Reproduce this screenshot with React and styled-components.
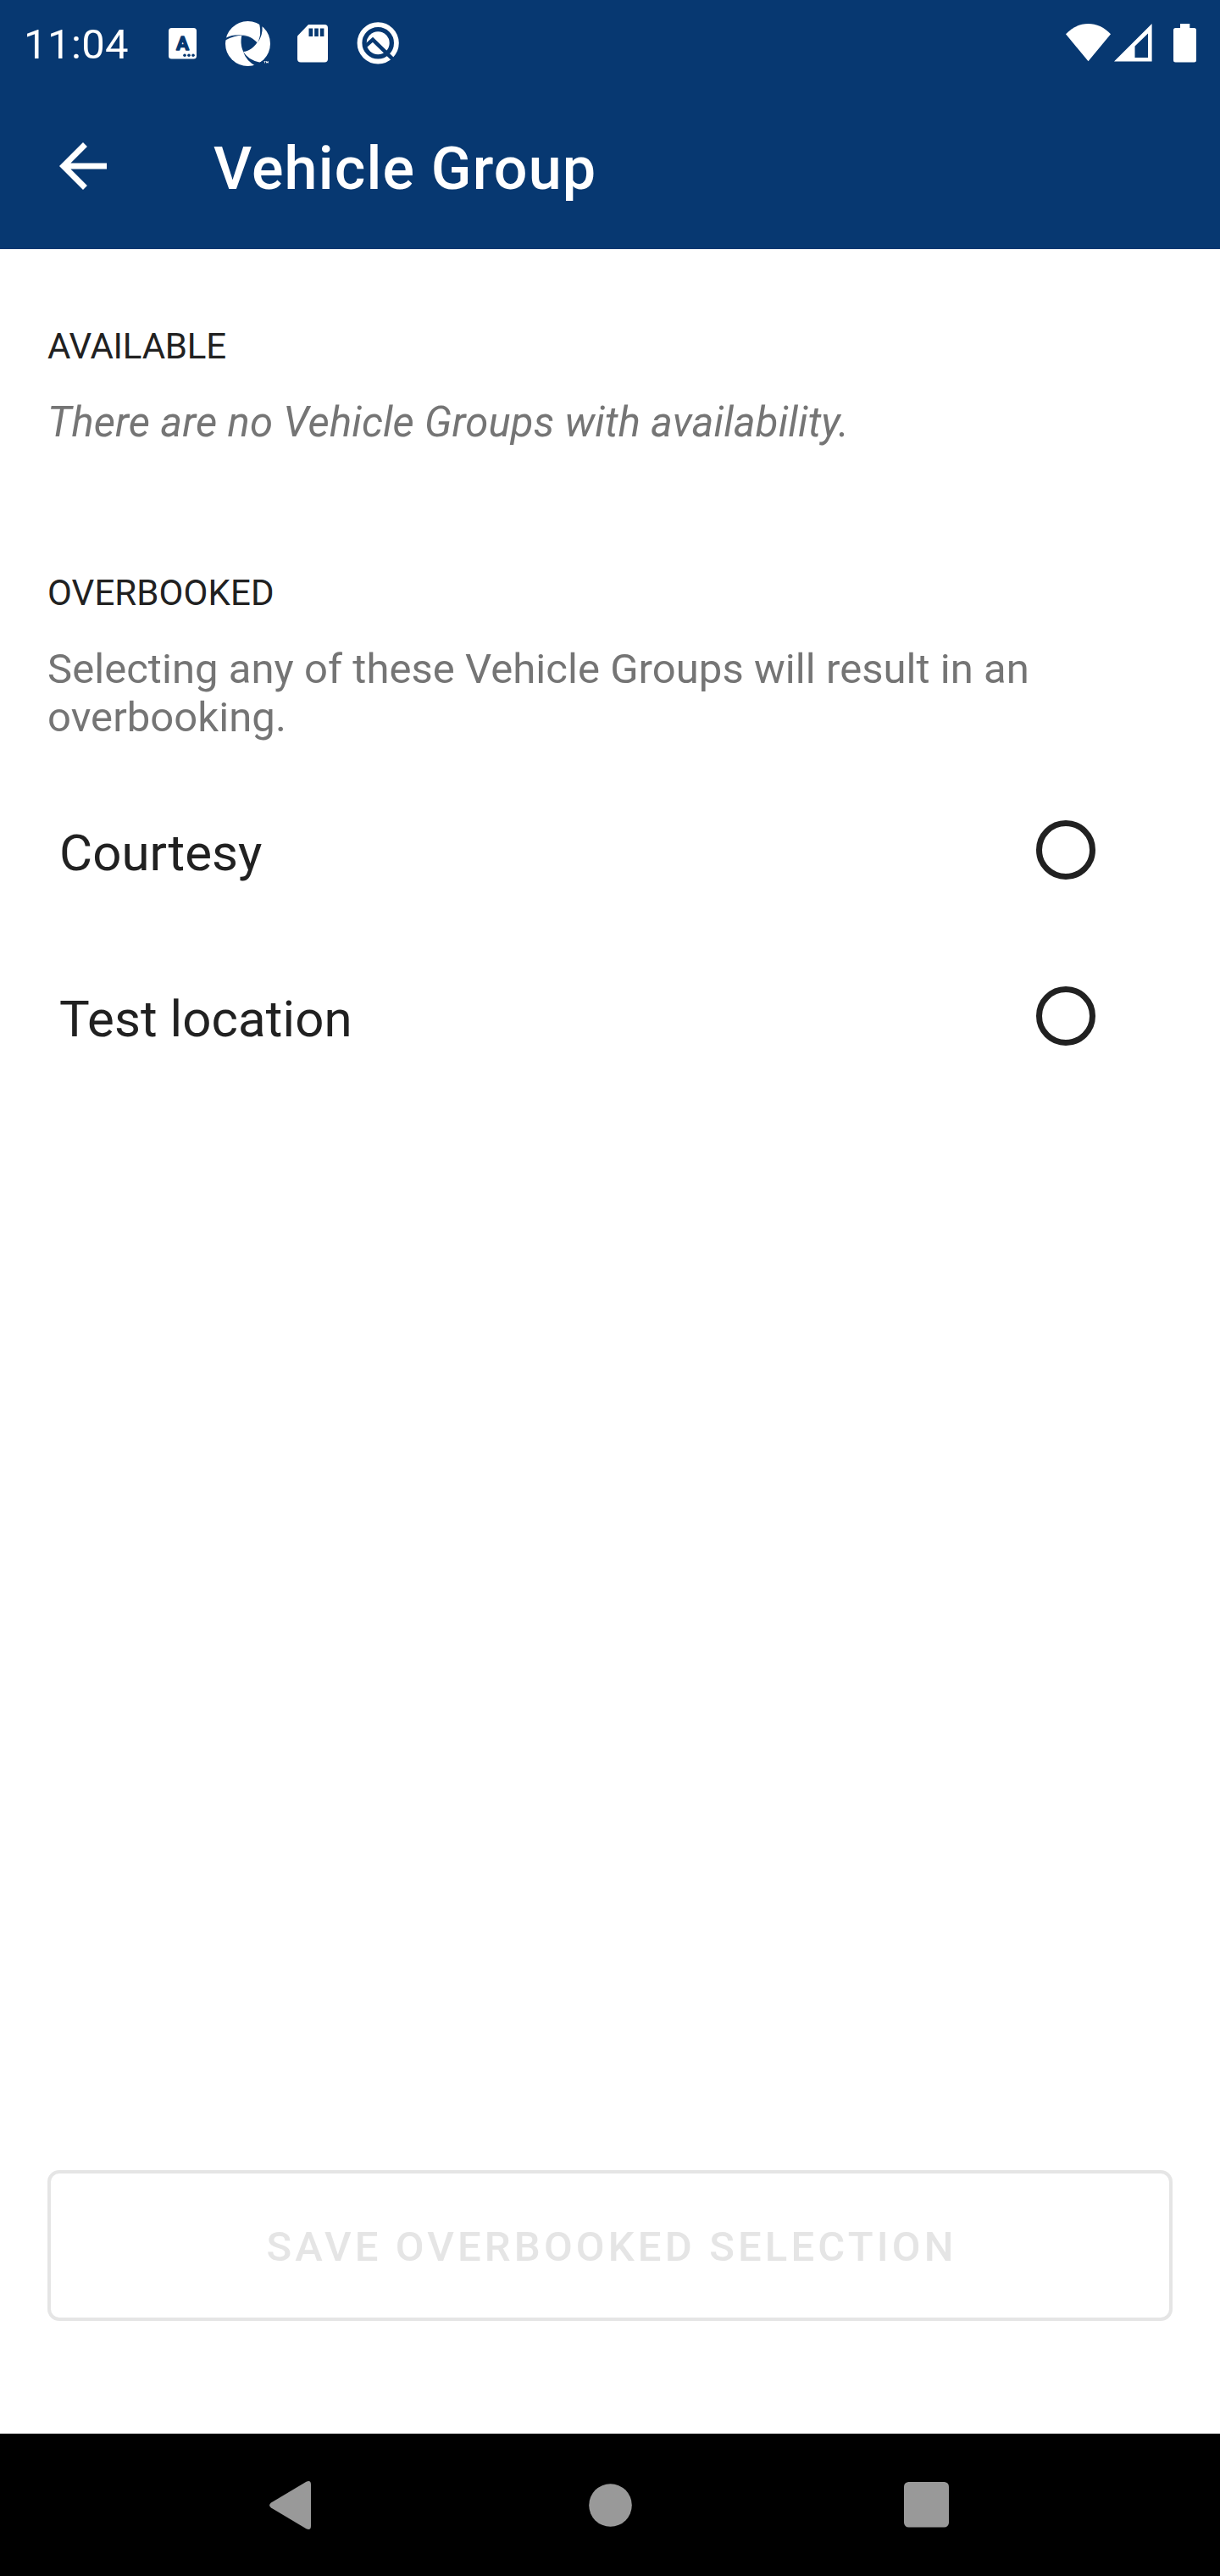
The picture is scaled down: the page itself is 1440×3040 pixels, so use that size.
import React from "react";
import styled, { createGlobalStyle } from "styled-components";

const NAVY = "#073871";
const INK = "#212121";
const MUTED = "#757575";
const DISABLED = "#e5e5e5";

const GlobalStyle = createGlobalStyle`
  * { box-sizing: border-box; }
  body { margin: 0; background: #fff; font-family: Roboto, sans-serif; }
  h1, h2, p { margin: 0; font-weight: 400; }
  svg { display: block; flex: none; }
`;

const Screen = styled.div`
  display: flex;
  flex-direction: column;
  width: 1440px;
  height: 3040px;
  background: #fff;
  color: ${INK};
`;

const StatusBar = styled.header`
  display: flex;
  justify-content: space-between;
  height: 98px;
  padding: 0 28px 0 28px;
  background: ${NAVY};
  color: #fff;
`;

const StatusGroup = styled.div`
  display: flex;
  align-items: flex-start;
`;

const Clock = styled.span`
  width: 171px;
  padding-top: 24px;
  font-size: 49px;
  line-height: 58px;
  letter-spacing: 0.4px;
`;

const StatusIcon = styled.svg`
  margin-top: ${(p) => p.$top}px;
  margin-right: ${(p) => p.$gap || 0}px;
`;

const AppBar = styled.div`
  display: flex;
  align-items: center;
  height: 196px;
  padding: 0 56px;
  background: ${NAVY};
  color: #fff;
`;

const BackButton = styled.button`
  width: 84px;
  height: 84px;
  margin-right: 112px;
  padding: 0;
  border: 0;
  background: none;
  color: inherit;
`;

const Title = styled.h1`
  padding-top: 6px;
  font-size: 70px;
  font-weight: 500;
  line-height: 82px;
  letter-spacing: 1.2px;
`;

const Content = styled.main`
  display: flex;
  flex-direction: column;
  flex: 1;
  padding: 90px 56px 133px;
`;

const Section = styled.section`
  margin-bottom: ${(p) => p.$bottom}px;
`;

const SectionLabel = styled.h2`
  margin-bottom: 36px;
  font-size: 42px;
  line-height: 50px;
  letter-spacing: ${(p) => p.$tracking}px;
  text-transform: uppercase;
`;

const Description = styled.p`
  color: ${MUTED};
  font-size: 49px;
  font-style: ${(p) => (p.$italic ? "italic" : "normal")};
  line-height: 57px;
  letter-spacing: ${(p) => p.$tracking}px;
`;

const Options = styled.div`
  display: flex;
  flex-direction: column;
`;

const Option = styled.label`
  display: flex;
  align-items: center;
  justify-content: space-between;
  height: 196px;
  padding: 0 91px 0 14px;
`;

const OptionName = styled.span`
  padding-top: 7px;
  font-size: 60px;
  line-height: 70px;
  letter-spacing: 0.08px;
`;

const Radio = styled.span`
  width: 70px;
  height: 70px;
  border: 7px solid ${INK};
  border-radius: 50%;
`;

const SaveButton = styled.button`
  height: 178px;
  margin-top: auto;
  padding: 4px 0 0 4px;
  border: 4px solid ${DISABLED};
  border-radius: 14px;
  background: none;
  color: ${DISABLED};
  font: 500 49px/58px Roboto, sans-serif;
  letter-spacing: 4.15px;
  text-transform: uppercase;
`;

const NavBar = styled.nav`
  display: flex;
  align-items: center;
  height: 168px;
  padding: 0 320px 0 318px;
  justify-content: space-between;
  background: #000;
  color: #999;
`;

const HomeIcon = styled.svg`
  margin-left: 6px;
`;

function KeyboardIcon() {
  return (
    <StatusIcon $top={33} $gap={34} width="33" height="37" viewBox="0 0 33 37">
      <rect width="33" height="36.6" rx="3.5" fill="#fff" />
      <text x="16.5" y="26.3" textAnchor="middle" fontFamily="Roboto, sans-serif" fontWeight="700" fontSize="22.5" fill={NAVY} stroke={NAVY} strokeWidth="1.3" strokeLinejoin="round">A</text>
      <circle cx="19" cy="32.3" r="1.8" fill={NAVY} />
      <circle cx="24" cy="32.3" r="1.8" fill={NAVY} />
      <circle cx="29" cy="32.3" r="1.8" fill={NAVY} />
    </StatusIcon>
  );
}

function ApertureIcon() {
  return (
    <StatusIcon $top={25} $gap={32} width="53" height="53" viewBox="0 0 53 53">
      <circle cx="26.5" cy="26.5" r="26.5" fill="#fff" />
      <path d="M19.3 17C26 16.4 32.7 19.7 37.5 25.3C33.2 31.6 27.5 35.7 21.2 36C18.2 29.5 18 23 19.3 17Z" fill={NAVY} />
      <path d="M37.6 25.6Q43.4 17.5 40 2L43.5 4Q44.6 18 37.6 25.6Z" fill={NAVY} />
      <path d="M26 17.1Q12 15.3 -1 23L0.5 19.7Q10 14.6 26 17.1Z" fill={NAVY} />
      <path d="M20.9 35.6Q27 46.6 42 49L36 53Q24.5 47 20.9 35.6Z" fill={NAVY} />
      <path d="M41 48.5L53 42V53H35Z" fill={NAVY} />
      <path d="M45.6 47.2h2v.9h-.6v1.5h-.8v-1.5h-.6zM48 47.2h.8l.6.9.6-.9h.8v2.4h-.7v-1l-.7.8-.7-.8v1H48z" fill="#fff" />
    </StatusIcon>
  );
}

function SdCardIcon() {
  return (
    <StatusIcon $top={29} $gap={34} width="36" height="45" viewBox="0 0 36 45">
      <path d="M13 0H32Q36 0 36 4V40.5Q36 44.5 32 44.5H4Q0 44.5 0 40.5V13.5Z" fill="#fff" />
      <path d="M13.5 4.5h4.7v9.4h-4.7zM20.2 4.5h4.6v9.4h-4.6zM26.8 4.5h4.6v9.4h-4.6z" fill={NAVY} />
    </StatusIcon>
  );
}

function QIcon() {
  return (
    <StatusIcon $top={26} width="50" height="50" viewBox="0 0 50 50">
      <circle cx="25.2" cy="24.8" r="21.7" fill="none" stroke="#fff" strokeWidth="5.8" />
      <circle cx="25.2" cy="24.8" r="13.5" fill="#fff" />
      <path d="M11 27.8L19 20.8L43.5 44.6" fill="none" stroke={NAVY} strokeWidth="4.4" />
    </StatusIcon>
  );
}

function App() {
  return (
    <>
      <GlobalStyle />
      <Screen>
        <StatusBar>
          <StatusGroup>
            <Clock>11:04</Clock>
            <KeyboardIcon />
            <ApertureIcon />
            <SdCardIcon />
            <QIcon />
          </StatusGroup>
          <StatusGroup>
            <StatusIcon $top={28} $gap={4} width="53" height="45" viewBox="0 0 53 45" fill="#fff">
              <path d="M0 12.3C15-4.1 38-4.1 53 12.3L26.5 44.3Z" />
            </StatusIcon>
            <StatusIcon $top={28} $gap={25} width="45" height="45" viewBox="0 0 45 45" fill="#fff">
              <path fillRule="evenodd" d="M0 44.5L44.6 0V44.5ZM24.5 26.5V40H40V11.5Z" />
            </StatusIcon>
            <StatusIcon $top={28} width="27" height="46" viewBox="0 0 27 46" fill="#fff">
              <path d="M8 0H19.3V5H24.5Q27 5 27 7.5V43Q27 45.5 24.5 45.5H2.5Q0 45.5 0 43V7.5Q0 5 2.5 5H8Z" />
            </StatusIcon>
          </StatusGroup>
        </StatusBar>

        <AppBar>
          <BackButton aria-label="Back">
            <svg width="84" height="84" viewBox="0 0 24 24" fill="currentColor">
              <path d="M20 11H7.83l5.59-5.59L12 4l-8 8 8 8 1.41-1.41L7.83 13H20v-2z" />
            </svg>
          </BackButton>
          <Title>Vehicle Group</Title>
        </AppBar>

        <Content>
          <Section $bottom={148}>
            <SectionLabel $tracking={-0.2}>Available</SectionLabel>
            <Description $italic $tracking={0.12}>There are no Vehicle Groups with availability.</Description>
          </Section>
          <Section $bottom={30}>
            <SectionLabel $tracking={0.1}>Overbooked</SectionLabel>
            <Description $tracking={0.05}>
              Selecting any of these Vehicle Groups will result in an<br />overbooking.
            </Description>
          </Section>
          <Options>
            {["Courtesy", "Test location"].map((name) => (
              <Option key={name}>
                <OptionName>{name}</OptionName>
                <Radio role="radio" aria-checked="false" />
              </Option>
            ))}
          </Options>
          <SaveButton disabled>Save overbooked selection</SaveButton>
        </Content>

        <NavBar>
          <svg width="49" height="57" viewBox="0 0 49 57" fill="currentColor">
            <path d="M43.5 .8Q49-1.5 49 4V53Q49 58.5 43.5 56.2L2 31.5Q-1.8 28.5 2 25.5Z" />
          </svg>
          <HomeIcon width="51" height="51" viewBox="0 0 51 51" fill="currentColor">
            <circle cx="25.5" cy="25.5" r="25.3" />
          </HomeIcon>
          <svg width="53" height="54" viewBox="0 0 53 54" fill="currentColor">
            <rect width="53" height="53.5" rx="5.5" />
          </svg>
        </NavBar>
      </Screen>
    </>
  );
}

export default App;
